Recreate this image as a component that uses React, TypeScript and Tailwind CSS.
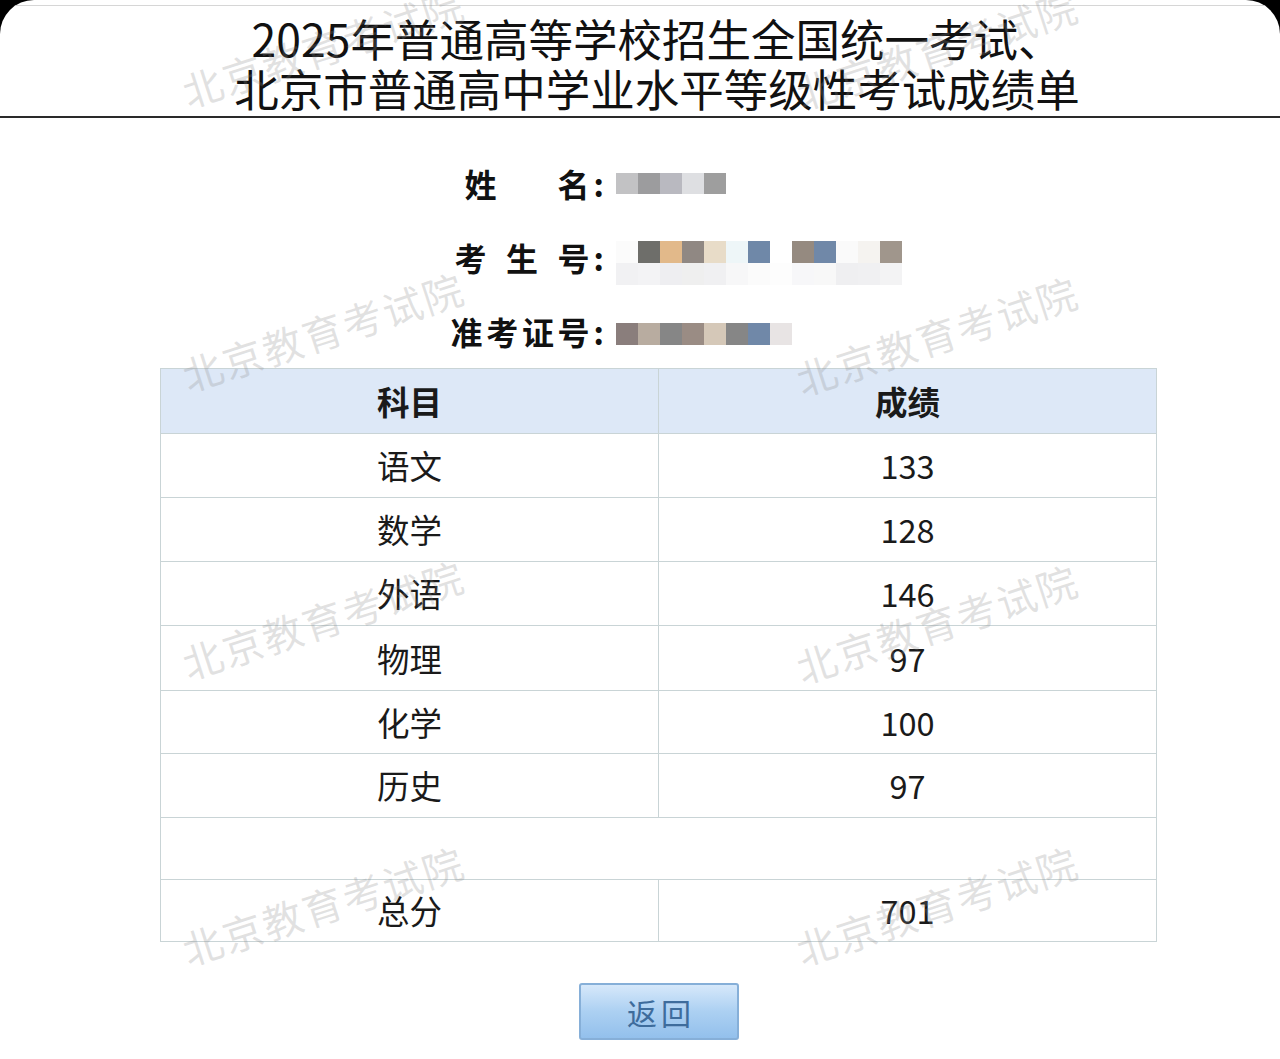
import React from 'react';

const font = { fontFamily: '"Noto Sans CJK SC", "Noto Sans", sans-serif' };

const scores = [
  { subject: '语文', score: '133', h: 'h-[64px]' },
  { subject: '数学', score: '128', h: 'h-[64px]' },
  { subject: '外语', score: '146', h: 'h-[64px]' },
  { subject: '物理', score: '97', h: 'h-[65px]' },
  { subject: '化学', score: '100', h: 'h-[63px]' },
  { subject: '历史', score: '97', h: 'h-[64px]' },
];

// mosaic blocks standing in for the blurred personal data
const nameBlocks = ['bg-[#c2c2c4]', 'bg-[#9c9c9e]', 'bg-[#b9b9c0]', 'bg-[#dedfe2]', 'bg-[#9e9e9e]'];
const idTop = [
  'bg-[#fbfbfb]', 'bg-[#6e6e6a]', 'bg-[#e2b98a]', 'bg-[#908883]', 'bg-[#e8dcc8]', 'bg-[#eef6f8]',
  'bg-[#6f88a8]', 'bg-[#ffffff]', 'bg-[#958a80]', 'bg-[#7088a8]', 'bg-[#fafafa]', 'bg-[#f5f3f0]', 'bg-[#a0968c]',
];
const idBottom = [
  'bg-[#f1f1f3]', 'bg-[#f3f3f5]', 'bg-[#eeeef1]', 'bg-[#efefef]', 'bg-[#f0f0f2]', 'bg-[#f7f7f8]',
  'bg-[#fbfbfb]', 'bg-[#fdfdfd]', 'bg-[#f7f7f9]', 'bg-[#f8f8f8]', 'bg-[#efeff1]', 'bg-[#f0f0f2]', 'bg-[#f3f3f4]',
];
const ticketBlocks = [
  'bg-[#8a7e7c]', 'bg-[#b8aca0]', 'bg-[#868686]', 'bg-[#9a8c84]', 'bg-[#d5c8b8]', 'bg-[#868686]',
  'bg-[#7088a8]', 'bg-[#e8e4e4]',
];

const watermarks = [
  'left-[176px] top-[26px]',
  'left-[790px] top-[28px]',
  'left-[176px] top-[310px]',
  'left-[790px] top-[314px]',
  'left-[176px] top-[598px]',
  'left-[790px] top-[602px]',
  'left-[176px] top-[884px]',
  'left-[790px] top-[884px]',
];

const Label = ({ chars, w }: { chars: string[]; w: string }) => (
  <div className="flex items-center justify-end w-[154px] text-[32px] font-bold text-[#111] leading-none">
    <div className={`flex justify-between ${w}`}>
      {chars.map((c, i) => (
        <span key={i}>{c}</span>
      ))}
    </div>
    <span className="ml-[4px]">:</span>
  </div>
);

export default function App() {
  return (
    <div className="w-[1280px] h-[1059px] bg-black overflow-hidden" style={font}>
      <div className="relative h-full bg-white rounded-t-[34px] overflow-hidden">
        {/* title */}
        <div className="pt-[5px]">
          <div className="border-t border-[#d6d6d6] border-b-2 border-b-[#2a2a2a] pt-[7px] pb-[3px] pl-[34px] text-center text-[44.5px] leading-[50px] text-[#111]">
            <div>2025年普通高等学校招生全国统一考试、</div>
            <div>北京市普通高中学业水平等级性考试成绩单</div>
          </div>
        </div>

        {/* student info */}
        <div className="mt-[28px] pl-[450px]">
          <div className="flex items-center h-[74px]">
            <Label chars={['姓', '名']} w="w-[125px]" />
            <div className="flex ml-[12px] blur-[0.6px]">
              {nameBlocks.map((c, i) => (
                <div key={i} className={`w-[22px] h-[21px] ${c}`} />
              ))}
            </div>
          </div>
          <div className="flex items-center h-[74px]">
            <Label chars={['考', '生', '号']} w="w-[135px]" />
            <div className="flex flex-col ml-[12px] mt-[12px] blur-[0.6px]">
              <div className="flex">
                {idTop.map((c, i) => (
                  <div key={i} className={`w-[22px] h-[22px] ${c}`} />
                ))}
              </div>
              <div className="flex">
                {idBottom.map((c, i) => (
                  <div key={i} className={`w-[22px] h-[22px] ${c}`} />
                ))}
              </div>
            </div>
          </div>
          <div className="flex items-center h-[74px]">
            <Label chars={['准', '考', '证', '号']} w="w-[139px]" />
            <div className="flex ml-[12px] mt-[6px] blur-[0.6px]">
              {ticketBlocks.map((c, i) => (
                <div key={i} className={`w-[22px] h-[22px] ${c}`} />
              ))}
            </div>
          </div>
        </div>

        {/* score table */}
        <div className="ml-[160px] w-[997px] border border-[#c9d4d6] text-[32.5px] text-[#1a1a1a]">
          <div className="grid grid-cols-[498px_1fr] h-[65px] bg-[#dde8f7] border-b border-[#c9d4d6] font-bold">
            <div className="flex items-center justify-center border-r border-[#c9d4d6]">科目</div>
            <div className="flex items-center justify-center">成绩</div>
          </div>
          {scores.map((r) => (
            <div key={r.subject} className={`grid grid-cols-[498px_1fr] border-b border-[#c9d4d6] ${r.h}`}>
              <div className="flex items-center justify-center border-r border-[#c9d4d6]">{r.subject}</div>
              <div className="flex items-center justify-center">{r.score}</div>
            </div>
          ))}
          <div className="h-[62px] border-b border-[#c9d4d6]" />
          <div className="grid grid-cols-[498px_1fr] h-[61px]">
            <div className="flex items-center justify-center border-r border-[#c9d4d6]">总分</div>
            <div className="flex items-center justify-center">701</div>
          </div>
        </div>

        {/* back button */}
        <div className="flex mt-[41px] ml-[579px]">
          <button className="w-[160px] h-[57px] rounded-[3px] border-2 border-[#86afd8] bg-gradient-to-b from-[#d6e8fa] via-[#acd0f2] to-[#93c0ec] text-[30px] leading-none tracking-[4px] pl-[4px] text-[#3e6c9c]">
            返回
          </button>
        </div>

        {/* watermark overlay */}
        {watermarks.map((pos, i) => (
          <div
            key={i}
            className={`absolute ${pos} pointer-events-none whitespace-nowrap text-[40px] leading-[42px] tracking-[2px] text-[#8a8a8a]/25 -rotate-[18deg]`}
          >
            北京教育考试院
          </div>
        ))}
      </div>
    </div>
  );
}
